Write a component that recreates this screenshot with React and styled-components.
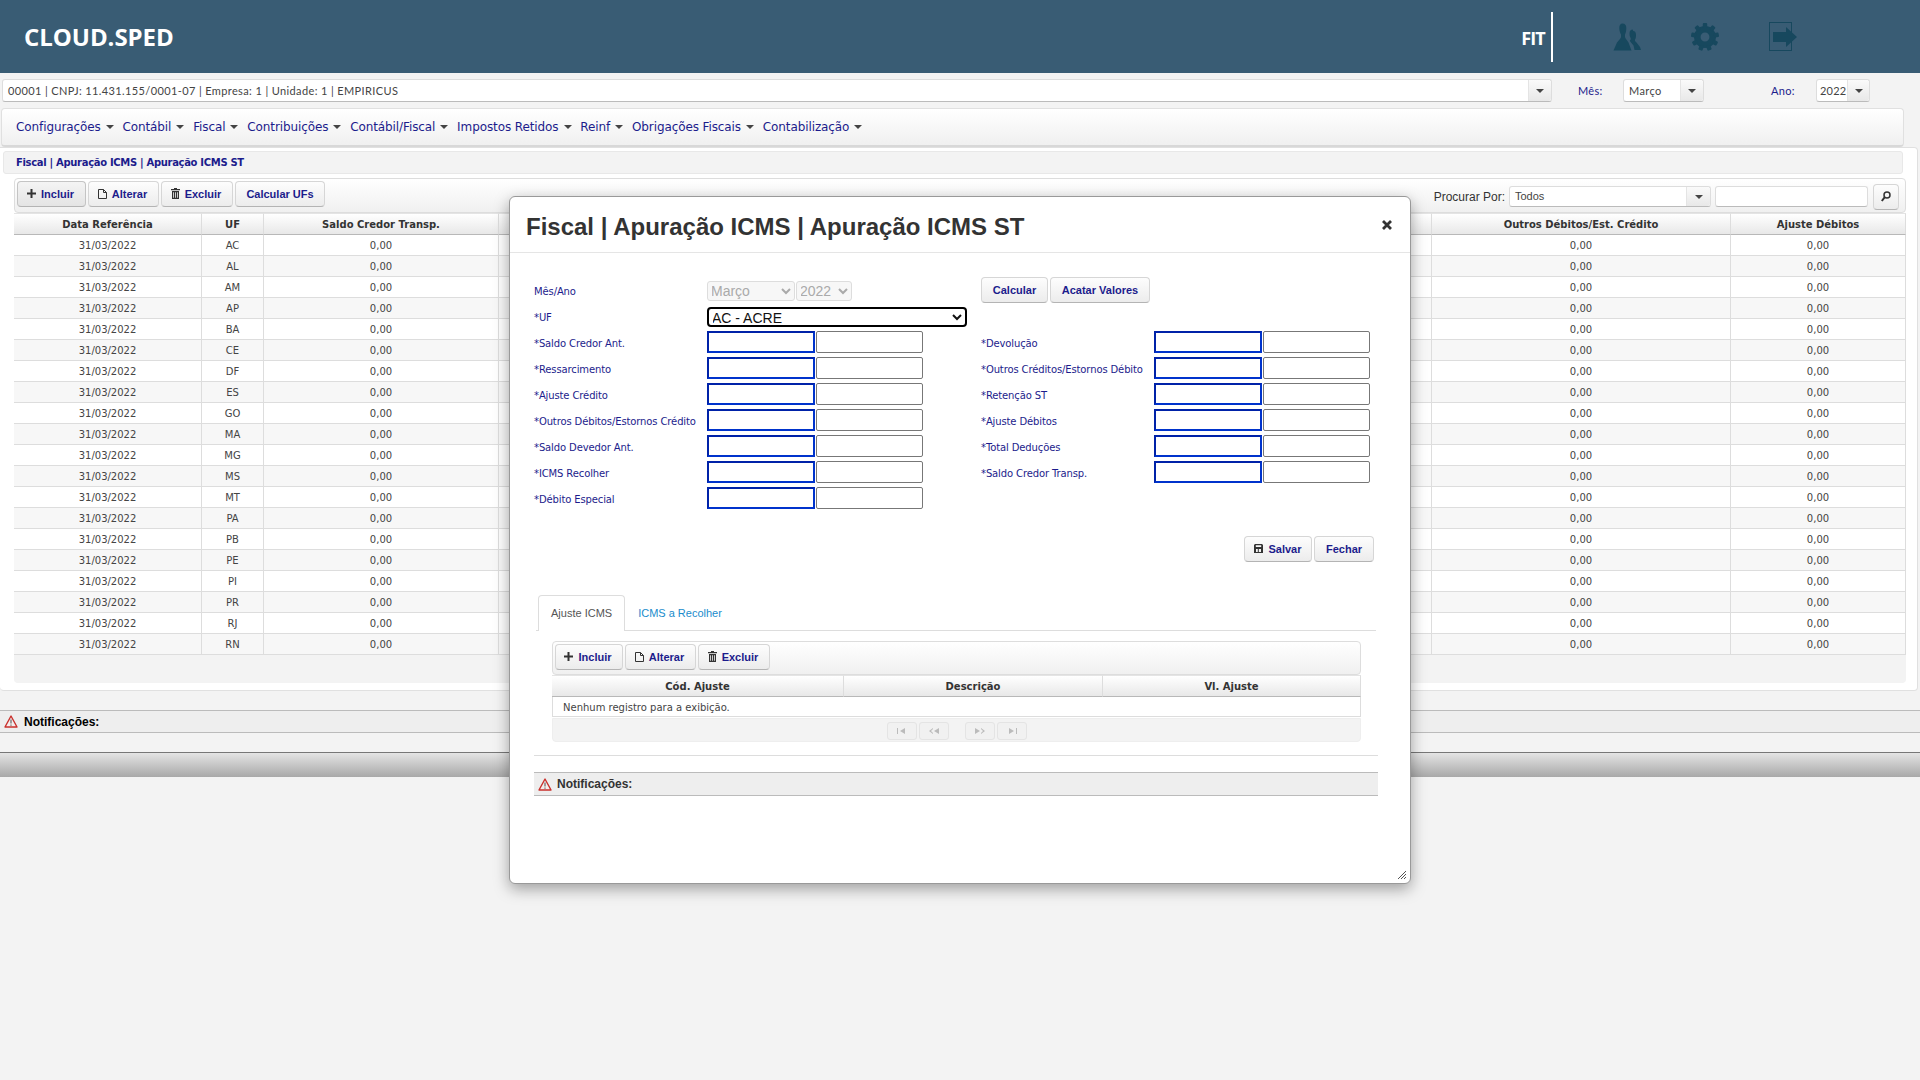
import React from "react";
import styled, { createGlobalStyle } from "styled-components";

const Global = createGlobalStyle`
  html, body { margin: 0; padding: 0; background: #f3f3f3; }
  body { font-family: "Liberation Sans", Arial, sans-serif; overflow: hidden; }
  * { box-sizing: border-box; }
`;

const NAVY = "#1c1c8c";
const VERDANA = `"DejaVu Sans", Verdana, sans-serif`;
const ARIAL = `"Liberation Sans", Arial, sans-serif`;

const Page = styled.div`
  position: relative;
  width: 1920px;
  height: 1080px;
  overflow: hidden;
  background: #f3f3f3;
`;

const Header = styled.header`
  height: 73px;
  background: #395c74;
  display: flex;
  align-items: center;
  padding: 0 123px 0 24px;
`;
const Logo = styled.div`
  font: 700 24px "Open Sans", sans-serif;
  letter-spacing: -0.05px;
  color: #fff;
  flex: 1;
`;
const FitName = styled.div`
  font: 700 18px "Open Sans", sans-serif;
  letter-spacing: -0.8px;
  color: #fff;
  padding: 3px 6px 0 0;
  height: 50px;
  line-height: 47px;
  border-right: 2px solid #fff;
  margin-right: 60px;
`;
const HeaderIcons = styled.div`
  display: flex;
  align-items: center;
  gap: 50px;
  color: #17485e;
`;

const CompanyBar = styled.div`
  display: flex;
  align-items: center;
  height: 23px;
  margin: 6px 0 0 2px;
`;
const Combo = styled.div`
  display: flex;
  height: ${(p) => p.$h || 23}px;
  width: ${(p) => p.$w}px;
  background: #fff;
  border: 1px solid #ddd;
  border-bottom-color: #bbb;
  border-radius: 3px;
  font: ${(p) => p.$font || `400 11px Lato, sans-serif`};
  letter-spacing: ${(p) => p.$ls ?? 0.38}px;
  color: #444;
`;
const ComboText = styled.div`
  flex: 1;
  min-width: 0;
  padding-left: ${(p) => p.$pl ?? 5}px;
  white-space: nowrap;
  line-height: ${(p) => p.$lh || 21}px;
`;
const ComboButton = styled.div`
  flex: none;
  width: ${(p) => p.$w || 23}px;
  background: linear-gradient(#fafafa, #e8e8e8);
  border-left: 1px solid #e4e4e4;
  border-radius: 0 3px 3px 0;
  display: flex;
  align-items: center;
  justify-content: center;
`;
const Caret = styled.i`
  display: inline-block;
  width: 0;
  height: 0;
  border-left: 4px solid transparent;
  border-right: 4px solid transparent;
  border-top: 4px solid ${(p) => p.$color || "#444"};
`;
const BarLabel = styled.span`
  font: 400 11px Lato, sans-serif;
  letter-spacing: 0.3px;
  color: ${NAVY};
  margin: ${(p) => p.$m};
  width: ${(p) => p.$w}px;
`;

const MenuBar = styled.nav`
  height: 39px;
  margin: 6px 16px 0 1px;
  padding: 0 0 0 14px;
  display: flex;
  align-items: center;
  gap: 8.800px;
  background: linear-gradient(#fff, #f0f0f0);
  border: 1px solid #e0e0e0;
  border-bottom: 2px solid #d8d8d8;
  border-radius: 4px;
`;
const MenuItem = styled.span`
  font: 400 12px ${VERDANA};
  letter-spacing: -0.1px;
  color: ${NAVY};
  display: inline-flex;
  align-items: center;
  gap: 5px;
`;

const Content = styled.main`
  height: 544px;
  padding-top: 3px;
  background: #fff;
  border: 1px solid #e0e0e0;
  border-left: none;
  border-radius: 0 4px 4px 4px;
  margin-right: 2px;
`;
const Crumb = styled.div`
  height: 23px;
  margin: 0 14px 0 3px;
  padding-left: 12px;
  background: #f3f3f3;
  border: 1px solid #e8e8e8;
  border-radius: 3px;
  font: 700 10px/21px ${VERDANA};
  letter-spacing: -0.32px;
  color: ${NAVY};
`;
const GridPanel = styled.section`
  margin: 4px 11px 0 14px;
`;
const Toolbar = styled.div`
  height: ${(p) => p.$h || 34}px;
  padding: 2px;
  display: flex;
  align-items: flex-start;
  gap: 2px;
  background: linear-gradient(#fff, #f0f0f0);
  border: 1px solid #ddd;
  border-radius: 4px;
`;
const Btn = styled.button`
  height: 26px;
  width: ${(p) => p.$w}px;
  margin: ${(p) => p.$m || 0};
  padding: 0 ${(p) => p.$pr || 0}px 1px 0;
  display: inline-flex;
  align-items: center;
  justify-content: center;
  gap: 5px;
  background: ${(p) =>
    p.$active ? "linear-gradient(#f4f4f4, #e4e4e4)" : "linear-gradient(#fdfdfd, #ececec)"};
  border: 1px solid ${(p) => (p.$active ? "#c4c4c4" : "#d6d6d6")};
  border-bottom-color: #b4b4b4;
  border-radius: 4px;
  font: 700 11px ${ARIAL};
  color: ${NAVY};
  svg { color: #333; flex: none; }
`;
const SearchGroup = styled.div`
  margin-left: auto;
  display: flex;
  align-items: center;
  height: 31px;
  padding-right: 4px;
  gap: 4px;
`;
const SearchLabel = styled.span`
  font: 400 12px ${ARIAL};
  color: #333;
`;
const SearchInput = styled.input`
  width: 153px;
  height: 21px;
  border: 1px solid #ddd;
  border-bottom-color: #bbb;
  border-radius: 3px;
  background: #fff;
  margin-right: 1px;
`;

const Table = styled.table`
  width: 100%;
  border-collapse: separate;
  border-spacing: 0;
  table-layout: fixed;
  font-family: ${VERDANA};
`;
const Th = styled.th`
  height: 22px;
  padding: 0;
  font: 700 10px ${VERDANA};
  color: #333;
  background: linear-gradient(#fff, #e8e8e8);
  border-right: 1px solid #ddd;
  border-bottom: 1px solid #b8b8b8;
  border-top: 1px solid #e4e4e4;
`;
const Td = styled.td`
  height: 21px;
  padding: 0;
  text-align: ${(p) => p.$align || "center"};
  font: 400 10px ${VERDANA};
  color: #444;
  background: ${(p) => (p.$alt ? "#f7f7f7" : "#fff")};
  border-right: 1px solid #ddd;
  border-bottom: 1px solid #ddd;
`;
const GridFooter = styled.div`
  height: 28px;
  background: #f3f3f3;
  border-radius: 0 0 4px 4px;
`;

const NotifyBar = styled.div`
  height: ${(p) => p.$h}px;
  margin: ${(p) => p.$m};
  display: flex;
  align-items: center;
  gap: ${(p) => p.$gap}px;
  padding-left: ${(p) => p.$pl}px;
  background: #eee;
  border-top: 1px solid #bbb;
  border-bottom: 1px solid #bbb;
  font: 700 12px ${ARIAL};
  color: ${(p) => p.$color};
`;
const BottomBar = styled.div`
  height: 25px;
  margin-top: 19px;
  background: linear-gradient(#e4e4e4, #a8a8a8);
  border-top: 1px solid #777;
`;

const Modal = styled.section`
  position: absolute;
  left: 509px;
  top: 196px;
  width: 902px;
  height: 688px;
  background: #fff;
  border: 1px solid #999;
  border-radius: 6px;
  box-shadow: 0 5px 15px rgba(0, 0, 0, 0.35);
`;
const ModalHead = styled.div`
  height: 56px;
  padding: 0 18px 0 16px;
  display: flex;
  align-items: center;
  justify-content: space-between;
  border-bottom: 1px solid #e5e5e5;
`;
const ModalTitle = styled.h3`
  margin: 5px 0 0;
  font: 700 24px ${ARIAL};
  color: #333;
`;
const ModalBody = styled.div`
  padding: 24px 32px 0 24px;
`;
const FormColumns = styled.div`
  display: grid;
  grid-template-columns: 447px 1fr;
`;
const FormRow = styled.div`
  display: flex;
  height: ${(p) => p.$h || 26}px;
  padding-bottom: ${(p) => p.$pb || 0}px;
  align-items: ${(p) => (p.$center ? "center" : "flex-start")};
  gap: ${(p) => p.$gap || 0}px;
`;
const Label = styled.label`
  width: 173px;
  flex: none;
  font: 400 10px/25px ${VERDANA};
  letter-spacing: -0.12px;
  color: ${NAVY};
  white-space: nowrap;
`;
const FirstLabel = styled(Label)`
  line-height: 22px;
  padding-top: 2px;
`;
const DisabledSelect = styled.select`
  width: ${(p) => p.$w}px;
  height: 20px;
  margin-right: 1px;
  padding: 0;
  text-indent: -1px;
  font: 400 14px ${ARIAL};
  color: #aaa;
  background: #f7f7f7;
  border: 1px solid #ddd;
  border-radius: 3px;
  opacity: 1;
`;
const UfSelect = styled.select`
  width: 260px;
  height: 20px;
  padding: 0;
  text-indent: -1px;
  font: 400 14px ${ARIAL};
  color: #111;
  background: #fff;
  border: 2px solid #000;
  border-radius: 4px;
`;
const ValueInput = styled.input`
  width: 108px;
  height: 22px;
  margin-right: 1px;
  background: #fff;
  border: 2px solid #0033cc;
  border-top-color: #0022a8;
  border-left-color: #0022a8;
  border-radius: 0;
`;
const PlainInput = styled.input`
  width: 107px;
  height: 22px;
  background: #fff;
  border: 1px solid #777;
  border-radius: 2px;
`;
const FormActions = styled.div`
  display: flex;
  justify-content: flex-end;
  gap: 2px;
  margin-top: 23px;
`;
const TabStrip = styled.div`
  display: flex;
  height: 36px;
  margin: 33px 2px 0;
  padding-left: 2px;
  border-bottom: 1px solid #ddd;
`;
const Tab = styled.div`
  height: 36px;
  padding: 0 12px;
  font: 400 11px/35px ${ARIAL};
  color: ${(p) => (p.$active ? "#555" : "#1a8ccc")};
  background: ${(p) => (p.$active ? "#fff" : "transparent")};
  border: 1px solid ${(p) => (p.$active ? "#ddd" : "transparent")};
  border-bottom: none;
  border-radius: 4px 4px 0 0;
`;
const TabPanel = styled.div`
  margin: 10px 17px 0 18px;
`;
const NoRows = styled(Td)`
  height: 20px;
  padding: 1px 0 0 10px;
  border-left: 1px solid #ddd;
`;
const Pager = styled.div`
  height: 24px;
  margin-top: 1px;
  padding: 3px 0 0 334px;
  display: flex;
  gap: 2px;
  background: #f3f3f3;
  border: 1px solid #eee;
  border-radius: 0 0 4px 4px;
`;
const PagerBtn = styled.span`
  width: 30px;
  height: 18px;
  margin-left: ${(p) => p.$ml || 0}px;
  display: flex;
  align-items: center;
  justify-content: center;
  background: #f1f1f1;
  border: 1px solid #e4e4e4;
  border-radius: 3px;
  color: #bbb;
`;
const Divider = styled.div`
  margin-top: 13px;
  border-top: 1px solid #ddd;
`;
const Grip = styled.svg`
  position: absolute;
  right: 4px;
  bottom: 4px;
`;
const CloseSlot = styled.span`
  display: flex;
  margin-top: 1px;
`;

const UsersIcon = () => (
  <svg width="28" height="28" viewBox="0 0 28 28" fill="currentColor">
    <path d="M9.500 .5C7.500 .5 6.300 2 6.300 5c0 3 .9 5 1.700 6.500V14c0 1-2 3-4 5.500L.5 27.500h18l-3-8C14 17 12 15 12 14v-2.500c.8-1.500 1.300-3.500 1.300-6.500 0-3-1.300-4.500-3.800-4.500z" />
    <path d="M19.700 6.500c-2 0-3.200 1.500-3.200 4 0 2 .5 3.500 1.200 4.500v1.500l-1 1.200 1.300 1.800 2.500 3 1 4.500H28l-1-3-3.500-4.500-1.500-1.500v-1.500c.8-1 1-2.500 1-4.500 0-2.500-1-4-2.800-4z" />
  </svg>
);
const GearIcon = () => (
  <svg width="28" height="28" viewBox="0 0 28 28" fill="currentColor">
    <circle cx="14" cy="14" r="7.700" fill="none" stroke="currentColor" strokeWidth="6.500" />
    {[0, 40, 80, 120, 160, 200, 240, 280, 320].map((a) => (
      <rect key={a} x="11.800" y="0" width="4.400" height="5" rx="1" transform={`rotate(${a} 14 14)`} />
    ))}
  </svg>
);
const ExitIcon = () => (
  <svg width="28" height="29" viewBox="0 0 28 29" fill="currentColor">
    <rect x="0.500" y="0.500" width="22" height="28" fill="none" stroke="currentColor" />
    <path d="M4 10h13V5l11 10-11 10v-5H4z" />
  </svg>
);
const PlusIcon = () => (
  <svg width="9" height="9" viewBox="0 0 9 9" fill="currentColor">
    <path d="M3.500 0h2v3.500H9v2H5.500V9h-2V5.500H0v-2h3.500z" />
  </svg>
);
const DocIcon = () => (
  <svg width="9" height="10" viewBox="0 0 9 10" fill="none" stroke="currentColor" strokeWidth="1">
    <path d="M.5.500h5l3 3v6h-8zM5.500.500v3h3" />
  </svg>
);
const TrashIcon = () => (
  <svg width="9" height="11" viewBox="0 0 9 11" fill="currentColor">
    <path d="M3 0h3v1h3v1.200H0V1h3zM1 3h7v8H1zm1.200 1.200v5.600h.8V4.200zm2 0v5.600h.8V4.200zm1.800 0v5.600h.8V4.200z" fillRule="evenodd" />
  </svg>
);
const SaveIcon = () => (
  <svg width="9" height="9" viewBox="0 0 9 9" fill="currentColor">
    <path d="M1 0h7l1 1v8H0V1zm.800 1.200v1.800h5.400V1.200zM2 5v3h1.800V5zm2.800 0v3H7V5z" fillRule="evenodd" />
  </svg>
);
const CloseIcon = () => (
  <svg width="10" height="10" viewBox="0 0 10 10" stroke="#333" strokeWidth="2.800">
    <path d="M1 1l8 8M9 1l-8 8" />
  </svg>
);
const SearchIcon = () => (
  <svg width="10" height="11" viewBox="0 0 10 11" fill="none" stroke="#333" strokeWidth="1.500">
    <circle cx="6" cy="4" r="3" />
    <path d="M3.800 6.200L.8 10" strokeWidth="2" />
  </svg>
);
const WarnIcon = () => (
  <svg width="14" height="13" viewBox="0 0 14 13">
    <path d="M7 1L1 12h12z" fill="#f4ecec" stroke="#c9302c" strokeWidth="1.400" strokeLinejoin="round" />
    <path d="M7 4.500v4M7 9.500v1.200" stroke="#666" strokeWidth="1.200" />
  </svg>
);
const PagerGlyph = ({ d }) => (
  <svg width="12" height="6" viewBox="0 0 12 6" fill="currentColor" stroke="none">
    <path d={d} />
  </svg>
);
const PG = {
  first: "M1 0h1v6H1zM9 0v6L4 3z",
  prev: "M5 0L1 3l4 3V5L3 3l2-2zM11 0v6L6 3z",
  next: "M1 0v6l5-3zM7 0l4 3-4 3V5l2-2-2-2z",
  last: "M3 0v6l5-3zM10 0h1v6h-1z",
};

const MENU = [
  "Configurações", "Contábil", "Fiscal", "Contribuições", "Contábil/Fiscal",
  "Impostos Retidos", "Reinf", "Obrigações Fiscais", "Contabilização",
];
const UFS = ["AC","AL","AM","AP","BA","CE","DF","ES","GO","MA","MG","MS","MT","PA","PB","PE","PI","PR","RJ","RN"];
const COLS = [188, 62, 235, 933, 299, 175];
const LEFT_FIELDS = [
  "*Saldo Credor Ant.", "*Ressarcimento", "*Ajuste Crédito", "*Outros Débitos/Estornos Crédito",
  "*Saldo Devedor Ant.", "*ICMS Recolher", "*Débito Especial",
];
const RIGHT_FIELDS = [
  "*Devolução", "*Outros Créditos/Estornos Débito", "*Retenção ST", "*Ajuste Débitos",
  "*Total Deduções", "*Saldo Credor Transp.",
];

const Field = ({ label }) => (
  <FormRow>
    <Label>{label}</Label>
    <ValueInput />
    <PlainInput />
  </FormRow>
);

export default function App() {
  return (
    <Page>
      <Global />
      <Header>
        <Logo>CLOUD.SPED</Logo>
        <FitName>FIT</FitName>
        <HeaderIcons>
          <UsersIcon />
          <GearIcon />
          <ExitIcon />
        </HeaderIcons>
      </Header>

      <CompanyBar>
        <Combo $w={1550}>
          <ComboText>00001 | CNPJ: 11.431.155/0001-07 | Empresa: 1 | Unidade: 1 | EMPIRICUS</ComboText>
          <ComboButton><Caret /></ComboButton>
        </Combo>
        <BarLabel $m="0 0 0 26px" $w={45}>Mês:</BarLabel>
        <Combo $w={81}>
          <ComboText>Março</ComboText>
          <ComboButton><Caret /></ComboButton>
        </Combo>
        <BarLabel $m="0 0 0 67px" $w={45}>Ano:</BarLabel>
        <Combo $w={54} $ls={0.2}>
          <ComboText $pl={3}>2022</ComboText>
          <ComboButton $w={22}><Caret /></ComboButton>
        </Combo>
      </CompanyBar>

      <MenuBar>
        {MENU.map((m) => (
          <MenuItem key={m}>{m}<Caret /></MenuItem>
        ))}
      </MenuBar>

      <Content>
        <Crumb>Fiscal | Apuração ICMS | Apuração ICMS ST</Crumb>
        <GridPanel>
          <Toolbar $h={35}>
            <Btn $w={69} $pr={2} $active><PlusIcon />Incluir</Btn>
            <Btn $w={71} $pr={2}><DocIcon />Alterar</Btn>
            <Btn $w={72} $pr={2}><TrashIcon />Excluir</Btn>
            <Btn $w={90}>Calcular UFs</Btn>
            <SearchGroup>
              <SearchLabel>Procurar Por:</SearchLabel>
              <Combo $w={202} $h={21} $ls={0} $font={`400 11px ${ARIAL}`}>
                <ComboText $lh={19}>Todos</ComboText>
                <ComboButton $w={24}><Caret /></ComboButton>
              </Combo>
              <SearchInput />
              <Btn $w={26}><SearchIcon /></Btn>
            </SearchGroup>
          </Toolbar>
          <Table>
            <colgroup>
              {COLS.map((w, i) => <col key={i} style={{ width: w }} />)}
            </colgroup>
            <thead>
              <tr>
                <Th>Data Referência</Th>
                <Th>UF</Th>
                <Th>Saldo Credor Transp.</Th>
                <Th />
                <Th>Outros Débitos/Est. Crédito</Th>
                <Th>Ajuste Débitos</Th>
              </tr>
            </thead>
            <tbody>
              {UFS.map((uf, i) => (
                <tr key={uf}>
                  <Td $alt={i % 2}>31/03/2022</Td>
                  <Td $alt={i % 2}>{uf}</Td>
                  <Td $alt={i % 2}>0,00</Td>
                  <Td $alt={i % 2} />
                  <Td $alt={i % 2}>0,00</Td>
                  <Td $alt={i % 2}>0,00</Td>
                </tr>
              ))}
            </tbody>
          </Table>
          <GridFooter />
        </GridPanel>
      </Content>

      <NotifyBar $h={23} $m="19px 0 0" $gap={6} $pl={4} $color="#000">
        <WarnIcon />Notificações:
      </NotifyBar>
      <BottomBar />

      <Modal>
        <ModalHead>
          <ModalTitle>Fiscal | Apuração ICMS | Apuração ICMS ST</ModalTitle>
          <CloseSlot><CloseIcon /></CloseSlot>
        </ModalHead>
        <ModalBody>
          <FormColumns>
            <div>
              <FormRow $h={27} $center>
                <FirstLabel>Mês/Ano</FirstLabel>
                <DisabledSelect $w={88} disabled defaultValue="Março"><option>Março</option></DisabledSelect>
                <DisabledSelect $w={56} disabled defaultValue="2022"><option>2022</option></DisabledSelect>
              </FormRow>
              <FormRow $h={27} $pb={1} $center>
                <FirstLabel>*UF</FirstLabel>
                <UfSelect defaultValue="AC - ACRE">
                  <option>AC - ACRE</option>
                  <option>AL - ALAGOAS</option>
                </UfSelect>
              </FormRow>
              {LEFT_FIELDS.map((f) => <Field key={f} label={f} />)}
            </div>
            <div>
              <FormRow $h={54} $gap={2}>
                <Btn $w={67}>Calcular</Btn>
                <Btn $w={100}>Acatar Valores</Btn>
              </FormRow>
              {RIGHT_FIELDS.map((f) => <Field key={f} label={f} />)}
            </div>
          </FormColumns>
          <FormActions>
            <Btn $w={68}><SaveIcon />Salvar</Btn>
            <Btn $w={60} $m="0 4px 0 0">Fechar</Btn>
          </FormActions>
          <TabStrip>
            <Tab $active>Ajuste ICMS</Tab>
            <Tab>ICMS a Recolher</Tab>
          </TabStrip>
          <TabPanel>
            <Toolbar>
              <Btn $w={68} $pr={2}><PlusIcon />Incluir</Btn>
              <Btn $w={71} $pr={2}><DocIcon />Alterar</Btn>
              <Btn $w={72} $pr={2}><TrashIcon />Excluir</Btn>
            </Toolbar>
            <Table>
              <colgroup>
                <col style={{ width: 292 }} />
                <col style={{ width: 259 }} />
                <col />
              </colgroup>
              <thead>
                <tr>
                  <Th>Cód. Ajuste</Th>
                  <Th>Descrição</Th>
                  <Th>Vl. Ajuste</Th>
                </tr>
              </thead>
              <tbody>
                <tr>
                  <NoRows $align="left" colSpan={3}>Nenhum registro para a exibição.</NoRows>
                </tr>
              </tbody>
            </Table>
            <Pager>
              <PagerBtn><PagerGlyph d={PG.first} /></PagerBtn>
              <PagerBtn><PagerGlyph d={PG.prev} /></PagerBtn>
              <PagerBtn $ml={14}><PagerGlyph d={PG.next} /></PagerBtn>
              <PagerBtn><PagerGlyph d={PG.last} /></PagerBtn>
            </Pager>
          </TabPanel>
          <Divider />
          <NotifyBar $h={24} $m="16px 0 0" $gap={5} $pl={4} $color="#333">
            <WarnIcon />Notificações:
          </NotifyBar>
        </ModalBody>
        <Grip width="8" height="8" viewBox="0 0 8 8" stroke="#555" strokeWidth="1">
          <path d="M0 8l8-8M3 8l5-5M6 8l2-2" />
        </Grip>
      </Modal>
    </Page>
  );
}
